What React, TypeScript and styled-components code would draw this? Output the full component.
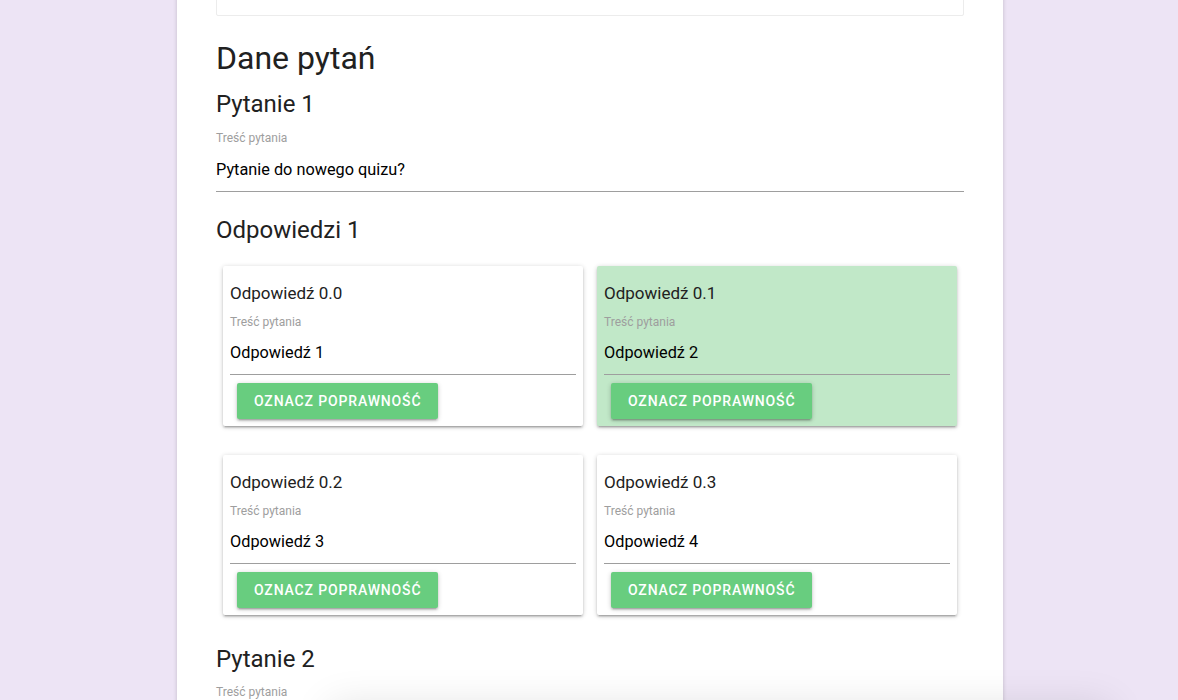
import styled, { createGlobalStyle } from "styled-components";

const GlobalStyle = createGlobalStyle`
  html, body {
    margin: 0;
    padding: 0;
    background: #ede4f5;
    font-family: Roboto, "Liberation Sans", sans-serif;
    overflow: hidden;
  }
`;

const Page = styled.div`
  display: flex;
  justify-content: center;
  min-height: 100vh;
  padding-left: 2px;
`;

const Panel = styled.main`
  width: 826px;
  margin-top: -40px;
  padding: 0 39px 40px;
  box-sizing: border-box;
  background: #fff;
  box-shadow: 0 0 4px rgba(0, 0, 0, 0.18);
`;

const SettingsBox = styled.div`
  height: 56px;
  box-sizing: border-box;
  border: 1px solid #ececec;
  border-radius: 2px;
  padding: 20px 10px;
  font-size: 16px;
  line-height: 20px;
  color: #222;
`;

const PageTitle = styled.h1`
  margin: 22px 0 0;
  font-size: 32px;
  line-height: 40px;
  font-weight: 400;
  color: #212121;
`;

const SectionTitle = styled.h2<{ $top: number }>`
  margin: ${(p) => p.$top}px 0 0;
  font-size: 24px;
  line-height: 32px;
  font-weight: 400;
  color: #212121;
`;

const Field = styled.div<{ $top: number }>`
  margin-top: ${(p) => p.$top}px;
`;

const Label = styled.div`
  font-size: 12px;
  line-height: 16px;
  color: #9e9e9e;
`;

const Input = styled.div<{ $gap: number; $pad: number }>`
  margin-top: ${(p) => p.$gap}px;
  padding-bottom: ${(p) => p.$pad}px;
  border-bottom: 1px solid #9e9e9e;
  font-size: 16.3px;
  line-height: 20px;
  color: #000;
`;

const AnswerGrid = styled.div`
  display: grid;
  grid-template-columns: 1fr 1fr;
  column-gap: 14px;
  row-gap: 29px;
  margin-top: 20px;
  padding: 0 7px;
`;

const Card = styled.div<{ $correct?: boolean }>`
  padding: 17px 7px 7px;
  border-radius: 2px;
  background: ${(p) => (p.$correct ? "#c1e8c8" : "#fff")};
  box-shadow: 0 2px 2px 0 rgba(0, 0, 0, 0.14), 0 3px 1px -2px rgba(0, 0, 0, 0.12),
    0 1px 5px 0 rgba(0, 0, 0, 0.2);
`;

const CardTitle = styled.div`
  font-size: 17px;
  line-height: 20px;
  color: #212121;
`;

const MarkButton = styled.button`
  display: block;
  margin: 8px 0 0 7px;
  height: 36px;
  padding: 0 17px;
  border: none;
  border-radius: 2px;
  background: #68cd7f;
  color: #fff;
  font-family: inherit;
  font-size: 14px;
  font-weight: 500;
  letter-spacing: 0.85px;
  text-transform: uppercase;
  box-shadow: 0 2px 2px 0 rgba(0, 0, 0, 0.14), 0 3px 1px -2px rgba(0, 0, 0, 0.12),
    0 1px 5px 0 rgba(0, 0, 0, 0.2);
  cursor: pointer;
`;

const FloatingBar = styled.div`
  position: fixed;
  left: 330px;
  width: 780px;
  top: 712px;
  height: 60px;
  background: #fff;
  box-shadow: 0 -6px 40px rgba(0, 0, 0, 0.12);
`;

const answers = [
  { title: "Odpowiedź 0.0", value: "Odpowiedź 1", correct: false },
  { title: "Odpowiedź 0.1", value: "Odpowiedź 2", correct: true },
  { title: "Odpowiedź 0.2", value: "Odpowiedź 3", correct: false },
  { title: "Odpowiedź 0.3", value: "Odpowiedź 4", correct: false },
];

export default function App() {
  return (
    <>
      <GlobalStyle />
      <Page>
        <Panel>
          <SettingsBox>Ustawienia</SettingsBox>
          <PageTitle>Dane pytań</PageTitle>
          <SectionTitle $top={10}>Pytanie 1</SectionTitle>
          <Field $top={10}>
            <Label>Treść pytania</Label>
            <Input $gap={14} $pad={11}>
              Pytanie do nowego quizu?
            </Input>
          </Field>
          <SectionTitle $top={22}>Odpowiedzi 1</SectionTitle>
          <AnswerGrid>
            {answers.map((a) => (
              <Card key={a.title} $correct={a.correct}>
                <CardTitle>{a.title}</CardTitle>
                <Field $top={11}>
                  <Label>Treść pytania</Label>
                  <Input $gap={13} $pad={11}>
                    {a.value}
                  </Input>
                </Field>
                <MarkButton>Oznacz poprawność</MarkButton>
              </Card>
            ))}
          </AnswerGrid>
          <SectionTitle $top={28}>Pytanie 2</SectionTitle>
          <Field $top={9}>
            <Label>Treść pytania</Label>
            <Input $gap={14} $pad={11}>
              Pytanie drugie
            </Input>
          </Field>
        </Panel>
      </Page>
      <FloatingBar />
    </>
  );
}
